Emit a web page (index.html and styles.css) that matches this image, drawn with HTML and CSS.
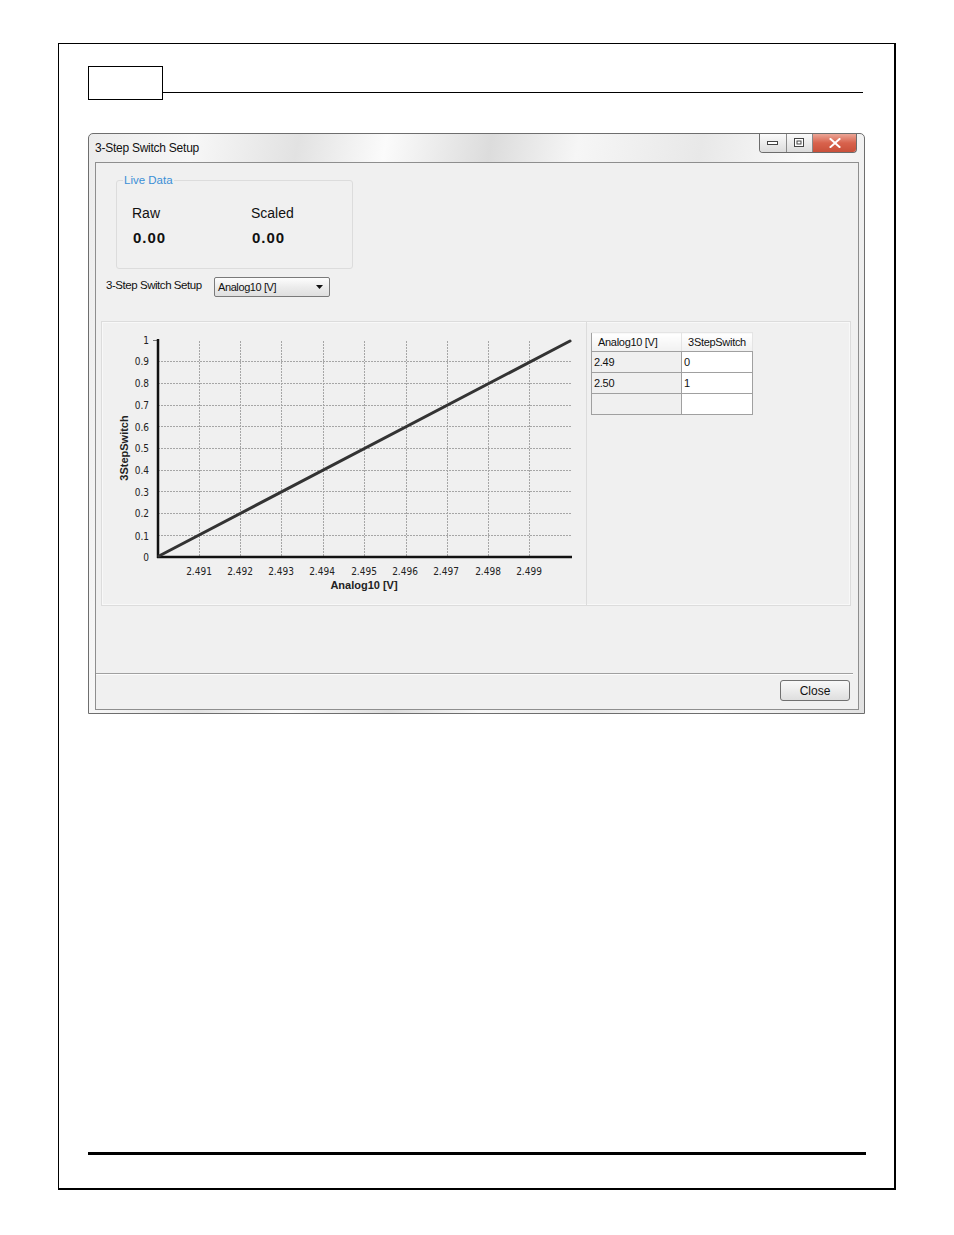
FILE: index.html
```html
<!DOCTYPE html>
<html>
<head>
<meta charset="utf-8">
<title>3-Step Switch Setup</title>
<link rel="stylesheet" href="styles.css">
</head>
<body>
<div class="page">
  <div class="head">
    <div class="head-box"></div>
    <div class="head-line"></div>
  </div>

  <div class="dialog">
    <div class="titlebar">
      <span class="title">3-Step Switch Setup</span>
      <div class="winbtns">
        <span class="wb wb-min"><svg width="12" height="6" viewBox="0 0 12 6"><rect x="0.5" y="1.5" width="10" height="3" fill="#fff" stroke="#444"/></svg></span>
        <span class="wb wb-max"><svg width="11" height="10" viewBox="0 0 11 10"><rect x="0.5" y="0.5" width="9" height="8" fill="#fff" stroke="#444"/><rect x="3" y="3" width="4" height="3" fill="none" stroke="#444"/></svg></span>
        <span class="wb wb-close"><svg width="12" height="10" viewBox="0 0 12 10"><path d="M1.5 1 L10.5 9 M10.5 1 L1.5 9" stroke="#fff" stroke-width="2" stroke-linecap="square"/></svg></span>
      </div>
    </div>

    <div class="client">
      <fieldset class="group">
        <legend class="legend">Live Data</legend>
        <div class="live">
          <span class="live-label">Raw</span>
          <span class="live-label">Scaled</span>
          <span class="live-value">0.00</span>
          <span class="live-value">0.00</span>
        </div>
      </fieldset>

      <div class="setup-row">
        <span class="setup-label">3-Step Switch Setup</span>
        <div class="combo">
          <span class="combo-text">Analog10 [V]</span>
          <svg class="combo-arrow" width="7" height="4" viewBox="0 0 7 4"><path d="M0 0 H7 L3.5 4 Z" fill="#111"/></svg>
        </div>
      </div>

      <div class="panel">
        <div class="chart">
          <svg width="484" height="283" viewBox="102 322 484 283" class="chart-svg">
            <g stroke="#a6a6a6" stroke-width="1" stroke-dasharray="2 1" fill="none">
              <line x1="158" y1="535.5" x2="572" y2="535.5"/>
              <line x1="158" y1="513.5" x2="572" y2="513.5"/>
              <line x1="158" y1="491.5" x2="572" y2="491.5"/>
              <line x1="158" y1="470.5" x2="572" y2="470.5"/>
              <line x1="158" y1="448.5" x2="572" y2="448.5"/>
              <line x1="158" y1="426.5" x2="572" y2="426.5"/>
              <line x1="158" y1="405.5" x2="572" y2="405.5"/>
              <line x1="158" y1="383.5" x2="572" y2="383.5"/>
              <line x1="158" y1="361.5" x2="572" y2="361.5"/>
              <line x1="199.5" y1="341" x2="199.5" y2="557"/>
              <line x1="240.5" y1="341" x2="240.5" y2="557"/>
              <line x1="281.5" y1="341" x2="281.5" y2="557"/>
              <line x1="323.5" y1="341" x2="323.5" y2="557"/>
              <line x1="364.5" y1="341" x2="364.5" y2="557"/>
              <line x1="406.5" y1="341" x2="406.5" y2="557"/>
              <line x1="447.5" y1="341" x2="447.5" y2="557"/>
              <line x1="488.5" y1="341" x2="488.5" y2="557"/>
              <line x1="529.5" y1="341" x2="529.5" y2="557"/>
            </g>
            <line x1="153" y1="340.5" x2="158" y2="340.5" stroke="#777" stroke-width="1"/>
            <line x1="158" y1="339" x2="158" y2="558" stroke="#111" stroke-width="2.5"/>
            <line x1="157" y1="557" x2="572" y2="557" stroke="#111" stroke-width="2.5"/>
            <line x1="159" y1="556" x2="570" y2="341" stroke="#333" stroke-width="3" stroke-linecap="round"/>
            <g class="ylab" text-anchor="end">
              <text x="149" y="344">1</text>
              <text x="149" y="365">0.9</text>
              <text x="149" y="387">0.8</text>
              <text x="149" y="409">0.7</text>
              <text x="149" y="431">0.6</text>
              <text x="149" y="452">0.5</text>
              <text x="149" y="474">0.4</text>
              <text x="149" y="496">0.3</text>
              <text x="149" y="517">0.2</text>
              <text x="149" y="540">0.1</text>
              <text x="149" y="561">0</text>
            </g>
            <g class="xlab" text-anchor="middle">
              <text x="199" y="575">2.491</text>
              <text x="240" y="575">2.492</text>
              <text x="281" y="575">2.493</text>
              <text x="322" y="575">2.494</text>
              <text x="364" y="575">2.495</text>
              <text x="405" y="575">2.496</text>
              <text x="446" y="575">2.497</text>
              <text x="488" y="575">2.498</text>
              <text x="529" y="575">2.499</text>
            </g>
            <text class="axis-title" x="364" y="589" text-anchor="middle">Analog10 [V]</text>
            <text class="axis-title" x="0" y="0" text-anchor="middle" transform="translate(128 448) rotate(-90)">3StepSwitch</text>
          </svg>
        </div>
        <div class="grid-area">
          <table class="grid">
            <thead>
              <tr><th class="c1">Analog10 [V]</th><th class="c2">3StepSwitch</th></tr>
            </thead>
            <tbody>
              <tr><td class="c1">2.49</td><td class="c2">0</td></tr>
              <tr><td class="c1">2.50</td><td class="c2">1</td></tr>
              <tr><td class="c1"></td><td class="c2"></td></tr>
            </tbody>
          </table>
        </div>
      </div>

      <div class="separator"></div>
      <div class="btn-row">
        <button class="btn">Close</button>
      </div>
    </div>
  </div>

  <div class="foot"></div>
</div>
</body>
</html>
```

FILE: styles.css
```css
html, body {
  margin: 0;
  padding: 0;
  background: #fff;
}
body {
  font-family: "Liberation Sans", Arial, sans-serif;
  color: #000;
}

.page {
  box-sizing: border-box;
  margin: 43px 0 0 58px;
  width: 838px;
  height: 1147px;
  border: 1px solid #000;
  border-right-width: 2px;
  border-bottom-width: 2px;
  padding: 22px 0 0 29px;
  display: flex;
  flex-direction: column;
}

.head {
  display: flex;
  width: 775px;
}
.head-box {
  box-sizing: border-box;
  width: 75px;
  height: 34px;
  border: 1px solid #000;
}
.head-line {
  flex: 1;
  height: 1px;
  margin-top: 26px;
  background: #000;
}

.dialog {
  box-sizing: border-box;
  margin-top: 33px;
  width: 777px;
  height: 581px;
  border: 1px solid #6e6e6e;
  border-radius: 5px 5px 0 0;
  padding: 0 5px 3px 6px;
  display: flex;
  flex-direction: column;
  background: linear-gradient(100deg, #ececec 0%, #f7f7f7 12%, #e2e2e2 24%, #fbfbfb 34%, #dcdcdc 46%, #f6f6f6 56%, #e8e8e8 70%, #fafafa 82%, #e2e2e2 100%);
}

.titlebar {
  height: 28px;
  display: flex;
  justify-content: space-between;
  align-items: flex-start;
}
.title {
  font-size: 12px;
  letter-spacing: -0.25px;
  line-height: 28px;
  color: #111;
}
.winbtns {
  display: flex;
  margin-right: 2px;
  height: 18px;
  border: 1px solid #6c6c6c;
  border-top: none;
  border-radius: 0 0 4px 4px;
  overflow: hidden;
}
.wb {
  display: flex;
  align-items: center;
  justify-content: center;
  height: 18px;
}
.wb-min {
  width: 26px;
  background: linear-gradient(#fbfbfb, #dcdcdc);
  border-right: 1px solid #8a8a8a;
}
.wb-max {
  width: 25px;
  background: linear-gradient(#fbfbfb, #dcdcdc);
  border-right: 1px solid #8a8a8a;
}
.wb-close {
  width: 43px;
  background: linear-gradient(#eba596, #d8624c 50%, #c9503a);
}

.client {
  flex: 1;
  box-sizing: border-box;
  border: 1px solid #8e8e8e;
  background: #f0f0f0;
  display: flex;
  flex-direction: column;
  align-items: flex-start;
}

.group {
  box-sizing: border-box;
  margin: 10px 0 0 20px;
  width: 237px;
  height: 96px;
  padding: 0 10px 0 15px;
  border: 1px solid #dcdcdc;
  border-radius: 3px;
}
.legend {
  margin-left: -9px;
  padding: 0 1px;
  font-size: 11.5px;
  line-height: 14px;
  color: #3b8fd6;
}
.live {
  display: grid;
  grid-template-columns: 119px auto;
  row-gap: 8px;
  margin-top: 18px;
}
.live-label {
  font-size: 14px;
  line-height: 16px;
  color: #111;
}
.live-value {
  font-size: 15px;
  line-height: 18px;
  font-weight: bold;
  letter-spacing: 1px;
  padding-left: 1px;
  color: #111;
}

.setup-row {
  display: flex;
  align-items: center;
  margin: 8px 0 0 10px;
}
.setup-label {
  width: 108px;
  font-size: 11.5px;
  letter-spacing: -0.45px;
  line-height: 16px;
  margin-top: -4px;
  color: #111;
}
.combo {
  box-sizing: border-box;
  width: 116px;
  height: 20px;
  border: 1px solid #7a7a7a;
  border-radius: 2px;
  background: linear-gradient(#fdfdfd, #ececec 50%, #dfdfdf);
  display: flex;
  align-items: center;
  justify-content: space-between;
  padding: 0 6px 0 3px;
}
.combo-text {
  font-size: 11px;
  letter-spacing: -0.4px;
  color: #111;
}

.panel {
  box-sizing: border-box;
  margin: 24px 0 0 5px;
  width: 750px;
  height: 285px;
  border: 1px solid #dcdcdc;
  box-shadow: inset 0 0 0 1px #f8f8f8;
  display: flex;
}
.chart {
  width: 484px;
  border-right: 1px solid #dcdcdc;
}
.chart-svg {
  display: block;
}
.ylab text, .xlab text {
  font-family: "DejaVu Sans Condensed", "DejaVu Sans", sans-serif;
  font-size: 10px;
  fill: #222;
}
.axis-title {
  font-family: "Liberation Sans", Arial, sans-serif;
  font-size: 11px;
  font-weight: bold;
  fill: #222;
}

.grid-area {
  padding: 10px 0 0 4px;
}
.grid {
  border-collapse: collapse;
  font-size: 11px;
  letter-spacing: -0.3px;
  color: #111;
}
.grid th {
  height: 18px;
  padding: 0;
  font-weight: normal;
  text-align: center;
  background: linear-gradient(#ffffff, #f1f1f1);
  border-top: 1px solid #e4e4e4;
  border-left: 1px solid #e4e4e4;
  border-right: 1px solid #e4e4e4;
  border-bottom: 1px solid #a0a0a0;
}
.grid th.c1 {
  border-left: 1px solid #a0a0a0;
  text-align: left;
  padding-left: 6px;
}
.grid td {
  height: 20px;
  padding: 0 0 0 2px;
  border: 1px solid #a0a0a0;
  vertical-align: middle;
}
.grid .c1 { width: 87px; }
.grid .c2 { width: 68px; }
.grid th.c1 { width: 81px; }
.grid td.c1 { background: #f0f0f0; }
.grid td.c2 { background: #fff; }

.separator {
  margin-top: 67px;
  width: 757px;
  height: 1px;
  background: #a0a0a0;
  border-bottom: 1px solid #fcfcfc;
}
.btn-row {
  align-self: stretch;
  display: flex;
  justify-content: flex-end;
  padding: 5px 8px 0 0;
}
.btn {
  box-sizing: border-box;
  width: 70px;
  height: 21px;
  margin: 0;
  padding: 0;
  border: 1px solid #707070;
  border-radius: 3px;
  background: linear-gradient(#f8f8f8, #ececec 50%, #dedede);
  font-family: "Liberation Sans", Arial, sans-serif;
  font-size: 12px;
  color: #111;
}

.foot {
  margin-top: auto;
  margin-bottom: 33px;
  width: 778px;
  height: 3px;
  background: #000;
}
```
